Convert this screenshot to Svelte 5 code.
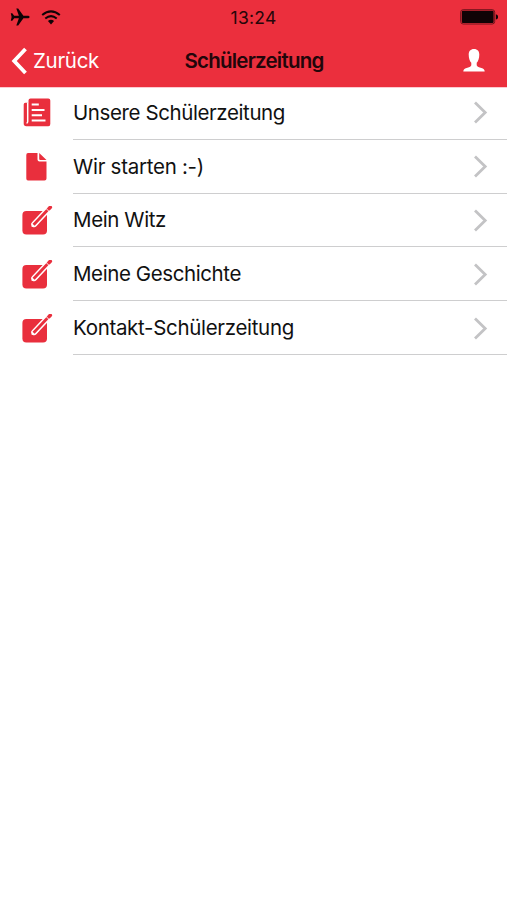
<script>
  const items = [
    { label: 'Unsere Schülerzeitung', icon: 'news', width: 212 },
    { label: 'Wir starten :-)', icon: 'page', width: 131 },
    { label: 'Mein Witz', icon: 'edit', width: 93 },
    { label: 'Meine Geschichte', icon: 'edit', width: 168 },
    { label: 'Kontakt-Schülerzeitung', icon: 'edit', width: 221 }
  ];

  // Adjusts letter-spacing so that a label takes its intended width.
  function fit(node, width) {
    const apply = () => {
      node.style.letterSpacing = '0px';
      const natural = node.getBoundingClientRect().width;
      node.style.letterSpacing = `${(width - natural) / node.textContent.length}px`;
    };
    apply();
    document.fonts?.ready.then(apply);
  }
</script>

<div class="screen">
  <header>
    <div class="status">
      <div class="signals">
        <svg width="20" height="18" viewBox="0 0 20 18">
          <path d="M19.6 9c0-.8-.9-1.3-2-1.3h-4.2L8.2.6H6.3l2.6 7.1H4.2L2.3 5.3H.8L1.6 9l-.8 3.7h1.5l1.9-2.4h4.7l-2.6 7.1h1.9l5.2-7.1h4.2c1.1 0 2-.5 2-1.3z" />
        </svg>
        <svg width="20" height="15" viewBox="0 0 20 15">
          <path d="M1.2 5.1Q10-2.4 18.8 5.1M4.3 8.5Q10 3.8 15.7 8.5" fill="none" stroke="#100306" stroke-width="2" />
          <path d="M6.900 11.100Q10 8.600 13.100 11.100L10 14.400z" />
        </svg>
      </div>
      <time use:fit={46}>13:24</time>
      <svg class="battery" width="38" height="16" viewBox="0 0 38 16">
        <rect x=".7" y=".7" width="34" height="14.3" rx="2.5" fill="none" stroke="#70141c" stroke-width="1" />
        <rect x="1.8" y="1.8" width="31.8" height="12.1" rx="1.2" />
        <path d="M35.9 5.2q2.2.5 2.2 2.7t-2.2 2.7z" />
      </svg>
    </div>
    <nav>
      <div class="back">
        <svg width="16" height="28" viewBox="0 0 16 28">
          <path d="M14.5 2 3.2 14 14.5 26" fill="none" stroke="#fff" stroke-width="3.8" />
        </svg>
        <span use:fit={66}>Zurück</span>
      </div>
      <h1 use:fit={139}>Schülerzeitung</h1>
      <svg class="user" width="22" height="23" viewBox="0 0 22 23">
        <path fill="#fff" d="M11 0c3.5 0 5.3 2.2 5.3 5.6 0 3.9-1.1 6.8-2.6 8.2v2.4c.4 1.5 2.5 2 4.7 2.9 2.2.8 3.2 1.6 3.3 3.5H.3c.1-1.9 1.1-2.7 3.3-3.5 2.2-.9 4.3-1.4 4.7-2.9v-2.4C6.8 12.4 5.7 9.5 5.7 5.6 5.7 2.2 7.5 0 11 0z" />
      </svg>
    </nav>
  </header>

  <ul>
    {#each items as item}
      <li>
        <div class="icon">
          {#if item.icon === 'news'}
            <svg width="29" height="29" viewBox="0 0 29 29">
              <path d="M8.5.5H26.300Q28.300.5 28.300 2.500V26Q28.300 28.200 26.300 28.200H4.300Q1.700 28.200 1.700 25.500V6.500Q1.700 4.800 3.300 4.800H6.500V2.500Q6.500.5 8.500.5z" />
              <path d="M5.700 4.500V23.500Q5.700 25 4.500 25" fill="none" stroke="#fff" stroke-width="1.500" />
              <path d="M9.700 6.600H16.800M9.700 12H22.500M9.700 17.200H20M9.700 22.600H23.500" fill="none" stroke="#fff" stroke-width="2" />
            </svg>
          {:else if item.icon === 'page'}
            <svg class="page" width="21" height="28" viewBox="0 0 21 28">
              <path d="M2 0H11.500V6.500Q11.500 8.500 13.500 8.500H20.500V25.500Q20.500 27.500 18.500 27.500H2Q.3 27.500 .3 25.500V2Q.3 0 2 0zM13.200 0 20.500 7H14.200Q13.200 7 13.200 6z" />
            </svg>
          {:else}
            <svg width="31" height="29" viewBox="0 0 31 29">
              <rect x=".4" y="5" width="24.600" height="23.500" rx="4" />
              <path d="M27 2.600 15.200 15 12.200 18.300" fill="none" stroke="#fff" stroke-width="5.800" stroke-linecap="round" />
              <path d="M13 14.200 9.600 17.400 9.600 20.900 13.200 20.600 16.500 17.200z" fill="#fff" />
              <path d="M26 3.600 14.700 15.500 11.600 18.800" fill="none" stroke="#e92f3d" stroke-width="2.900" />
              <path d="M26.900 2.700 28.300 1.300" fill="none" stroke="#e92f3d" stroke-width="3.600" stroke-linecap="round" />
              <path d="M24.200 2.600 27.400 5.800" fill="none" stroke="#fff" stroke-width=".9" />
            </svg>
          {/if}
        </div>
        <div class="row">
          <span use:fit={item.width}>{item.label}</span>
          <svg width="15" height="24" viewBox="0 0 15 24">
            <path d="M2 2.500 12.200 12.500 2 22.500" fill="none" stroke="#c3c3c5" stroke-width="2.800" />
          </svg>
        </div>
      </li>
    {/each}
  </ul>
</div>

<style>
  :global(body) { margin: 0; background: #fff; }
  .screen {
    width: 507px;
    height: 900px;
    overflow: hidden;
    background: #fff;
    color: #111;
    font-family: Inter, "Liberation Sans", sans-serif;
  }
  svg { display: block; flex: none; fill: #100306; }
  span, time, h1 { white-space: nowrap; }
  header { height: 87px; background: #eb2f3d; box-shadow: 0 1px #fccbd1; }
  .status, nav {
    display: grid;
    grid-template-columns: 1fr auto 1fr;
    align-items: center;
  }
  .status { height: 34px; padding: 0 9px 0 10px; }
  .signals { display: flex; align-items: center; gap: 11px; }
  time { margin-left: -1px; font-size: 17.5px; color: #260609; }
  .battery, .user { justify-self: end; }
  nav { height: 53px; padding: 0 22px 0 11px; }
  .back { display: flex; align-items: center; gap: 6px; color: #fff; font-size: 20.5px; }
  h1 { margin: 0 0 0 12px; font-size: 20.5px; font-weight: 600; color: #22060a; }
  ul { list-style: none; margin: -1px 0 0; padding: 0; }
  li { display: flex; height: 53.8px; }
  .icon { width: 51px; padding-left: 22px; display: flex; align-items: center; flex: none; }
  .page { margin-left: 4px; }
  .icon svg { fill: #e92f3d; }
  .row {
    flex: 1;
    display: flex;
    align-items: center;
    justify-content: space-between;
    padding-right: 19px;
    font-size: 20.5px;
    border-bottom: 1px solid #cececf;
  }
</style>
